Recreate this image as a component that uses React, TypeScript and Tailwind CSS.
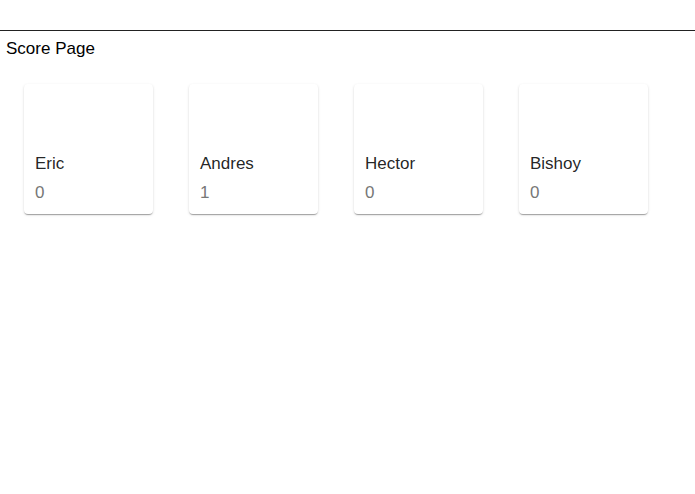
const players = [
  { name: "Eric", score: 0 },
  { name: "Andres", score: 1 },
  { name: "Hector", score: 0 },
  { name: "Bishoy", score: 0 },
];

function ScoreCard({ name, score }: { name: string; score: number }) {
  return (
    <div className="flex h-[130px] w-[129px] flex-col justify-end rounded-[4px] bg-white px-[11px] pb-[9px] shadow-[0px_2px_1px_-1px_rgba(0,0,0,0.2),0px_1px_1px_0px_rgba(0,0,0,0.14),0px_1px_3px_0px_rgba(0,0,0,0.12)]">
      <p className="text-[17px] leading-[24px] text-[rgba(0,0,0,0.87)]">{name}</p>
      <p className="mt-[5px] text-[17px] leading-[24px] text-[#777]">{score}</p>
    </div>
  );
}

export default function App() {
  return (
    <div className="min-h-[494px] bg-white font-['Liberation_Sans',Arial,sans-serif]">
      <div className="h-[31px] border-b border-[#222]" />
      <h1 className="pl-[6px] pt-[6px] text-[17px] leading-[24px] text-black">Score Page</h1>
      <div className="flex gap-[36px] pl-[24px] pt-[23px]">
        {players.map((p) => (
          <ScoreCard key={p.name} name={p.name} score={p.score} />
        ))}
      </div>
    </div>
  );
}
